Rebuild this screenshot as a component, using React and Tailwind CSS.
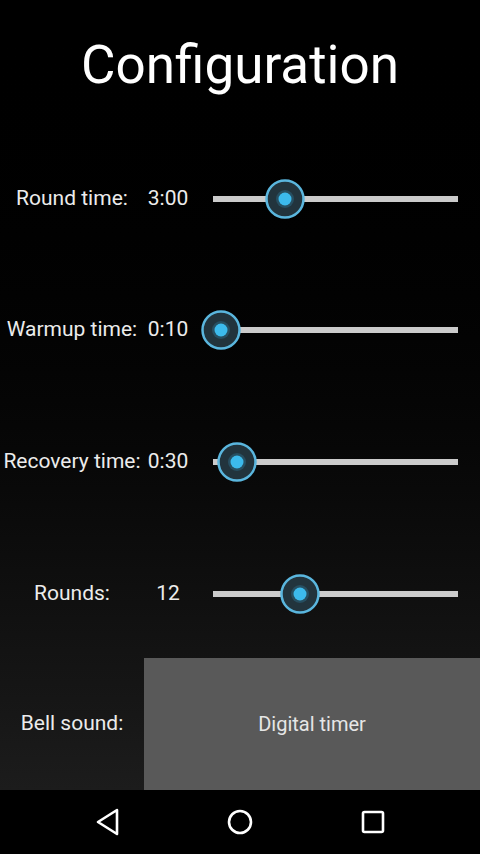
import React from "react";

const settings = [
  { label: "Round time:", value: "3:00", thumb: 72 },
  { label: "Warmup time:", value: "0:10", thumb: 8 },
  { label: "Recovery time:", value: "0:30", thumb: 24 },
  { label: "Rounds:", value: "12", thumb: 87 },
];

const Thumb = () => (
  <svg width="40" height="40" viewBox="0 0 40 40">
    <circle cx="20" cy="20" r="18.5" fill="#22343d" stroke="#5ab6de" strokeWidth="2.5" />
    <circle cx="20" cy="20" r="9" fill="#2b6a86" opacity="0.5" />
    <circle cx="20" cy="20" r="6.5" fill="#3cbaec" />
  </svg>
);

// thumb = px offset of the thumb centre from the left end of the track
const Slider = ({ thumb }) => (
  <div className="relative ml-[21px] mr-[22px] mt-[2px] h-10 flex items-center">
    <div className="h-[6px] w-full bg-[#cbcbcb]" />
    <div
      className="absolute top-0 -translate-x-1/2"
      style={{ left: `${thumb}px` }}
    >
      <Thumb />
    </div>
  </div>
);

const Row = ({ label, value, thumb }) => (
  <div className="flex-1 grid grid-cols-[144px_48px_1fr] items-center">
    <div className="text-center text-[#ececec] mt-[2px]">{label}</div>
    <div className="text-center text-[#ececec] mt-[2px]">{value}</div>
    <Slider thumb={thumb} />
  </div>
);

export default function App() {
  return (
    <div
      className="w-[480px] h-[854px] flex flex-col bg-black text-[21px]"
      style={{ fontFamily: "Roboto, 'Noto Sans', sans-serif" }}
    >
      <div className="h-[790px] flex flex-col bg-gradient-to-b from-black to-[#1c1c1c]">
        <div className="flex-1 flex items-center justify-center">
          <h1 className="text-[53px] text-white leading-none">Configuration</h1>
        </div>
        {settings.map((s) => (
          <Row key={s.label} {...s} />
        ))}
        <div className="flex-1 flex">
          <div className="w-[144px] flex items-center justify-center text-[#ececec]">
            Bell sound:
          </div>
          <div className="flex-1 bg-[#595959] flex items-center justify-center text-[20px] text-[#e6e6e6]">
            Digital timer
          </div>
        </div>
      </div>
      <div className="flex-1 bg-black flex items-center justify-center gap-[105px]">
        <svg width="28" height="28" viewBox="0 0 28 28">
          <path
            d="M24 2 L5 14 L24 26 Z"
            fill="none"
            stroke="white"
            strokeWidth="2.6"
            strokeLinejoin="round"
          />
        </svg>
        <svg width="28" height="28" viewBox="0 0 28 28">
          <circle cx="14" cy="14" r="11" fill="none" stroke="white" strokeWidth="2.6" />
        </svg>
        <svg width="28" height="28" viewBox="0 0 28 28">
          <rect x="4" y="4" width="20" height="20" rx="1.5" fill="none" stroke="white" strokeWidth="2.6" />
        </svg>
      </div>
    </div>
  );
}
